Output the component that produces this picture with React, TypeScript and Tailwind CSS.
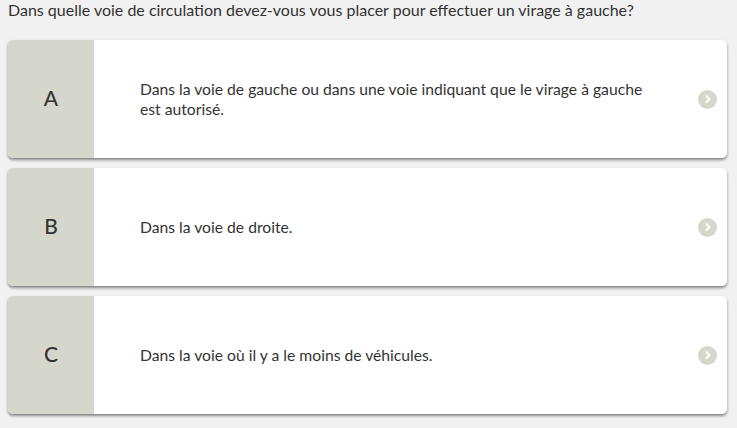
import { ChevronRight } from "lucide-react";

// réponses possibles
const answers = [
  {
    letter: "A",
    text: "Dans la voie de gauche ou dans une voie indiquant que le virage à gauche est autorisé.",
  },
  { letter: "B", text: "Dans la voie de droite." },
  { letter: "C", text: "Dans la voie où il y a le moins de véhicules." },
];

export default function App() {
  return (
    <div
      className="min-h-[428px] bg-[#f1f1f1] text-[#333] pl-2 pr-[10px]"
      style={{ fontFamily: "Lato, 'Open Sans', sans-serif" }}
    >
      <p className="text-[16px] leading-[20px]">
        Dans quelle voie de circulation devez-vous vous placer pour effectuer un virage à gauche?
      </p>

      <div className="mt-[20px] flex flex-col gap-[10px]">
        {answers.map((a) => (
          <div
            key={a.letter}
            className="flex h-[118px] bg-white rounded-[5px] overflow-hidden shadow-[0_2px_3px_rgba(0,0,0,0.45)]"
          >
            <div className="w-[86px] shrink-0 bg-[#d5d7cd] flex items-center justify-center pb-[3px] text-[21px] font-medium text-[#333]">
              {a.letter}
            </div>
            <div className="flex-1 flex items-center pl-[46px]">
              <p className="text-[15.7px] leading-[20px] max-w-[516px]">{a.text}</p>
            </div>
            <div className="shrink-0 flex items-center pr-[10px]">
              <span className="w-[19px] h-[19px] rounded-full bg-[#d5d7cd] flex items-center justify-center">
                <ChevronRight className="w-[12px] h-[12px] text-white" strokeWidth={4} />
              </span>
            </div>
          </div>
        ))}
      </div>
    </div>
  );
}
